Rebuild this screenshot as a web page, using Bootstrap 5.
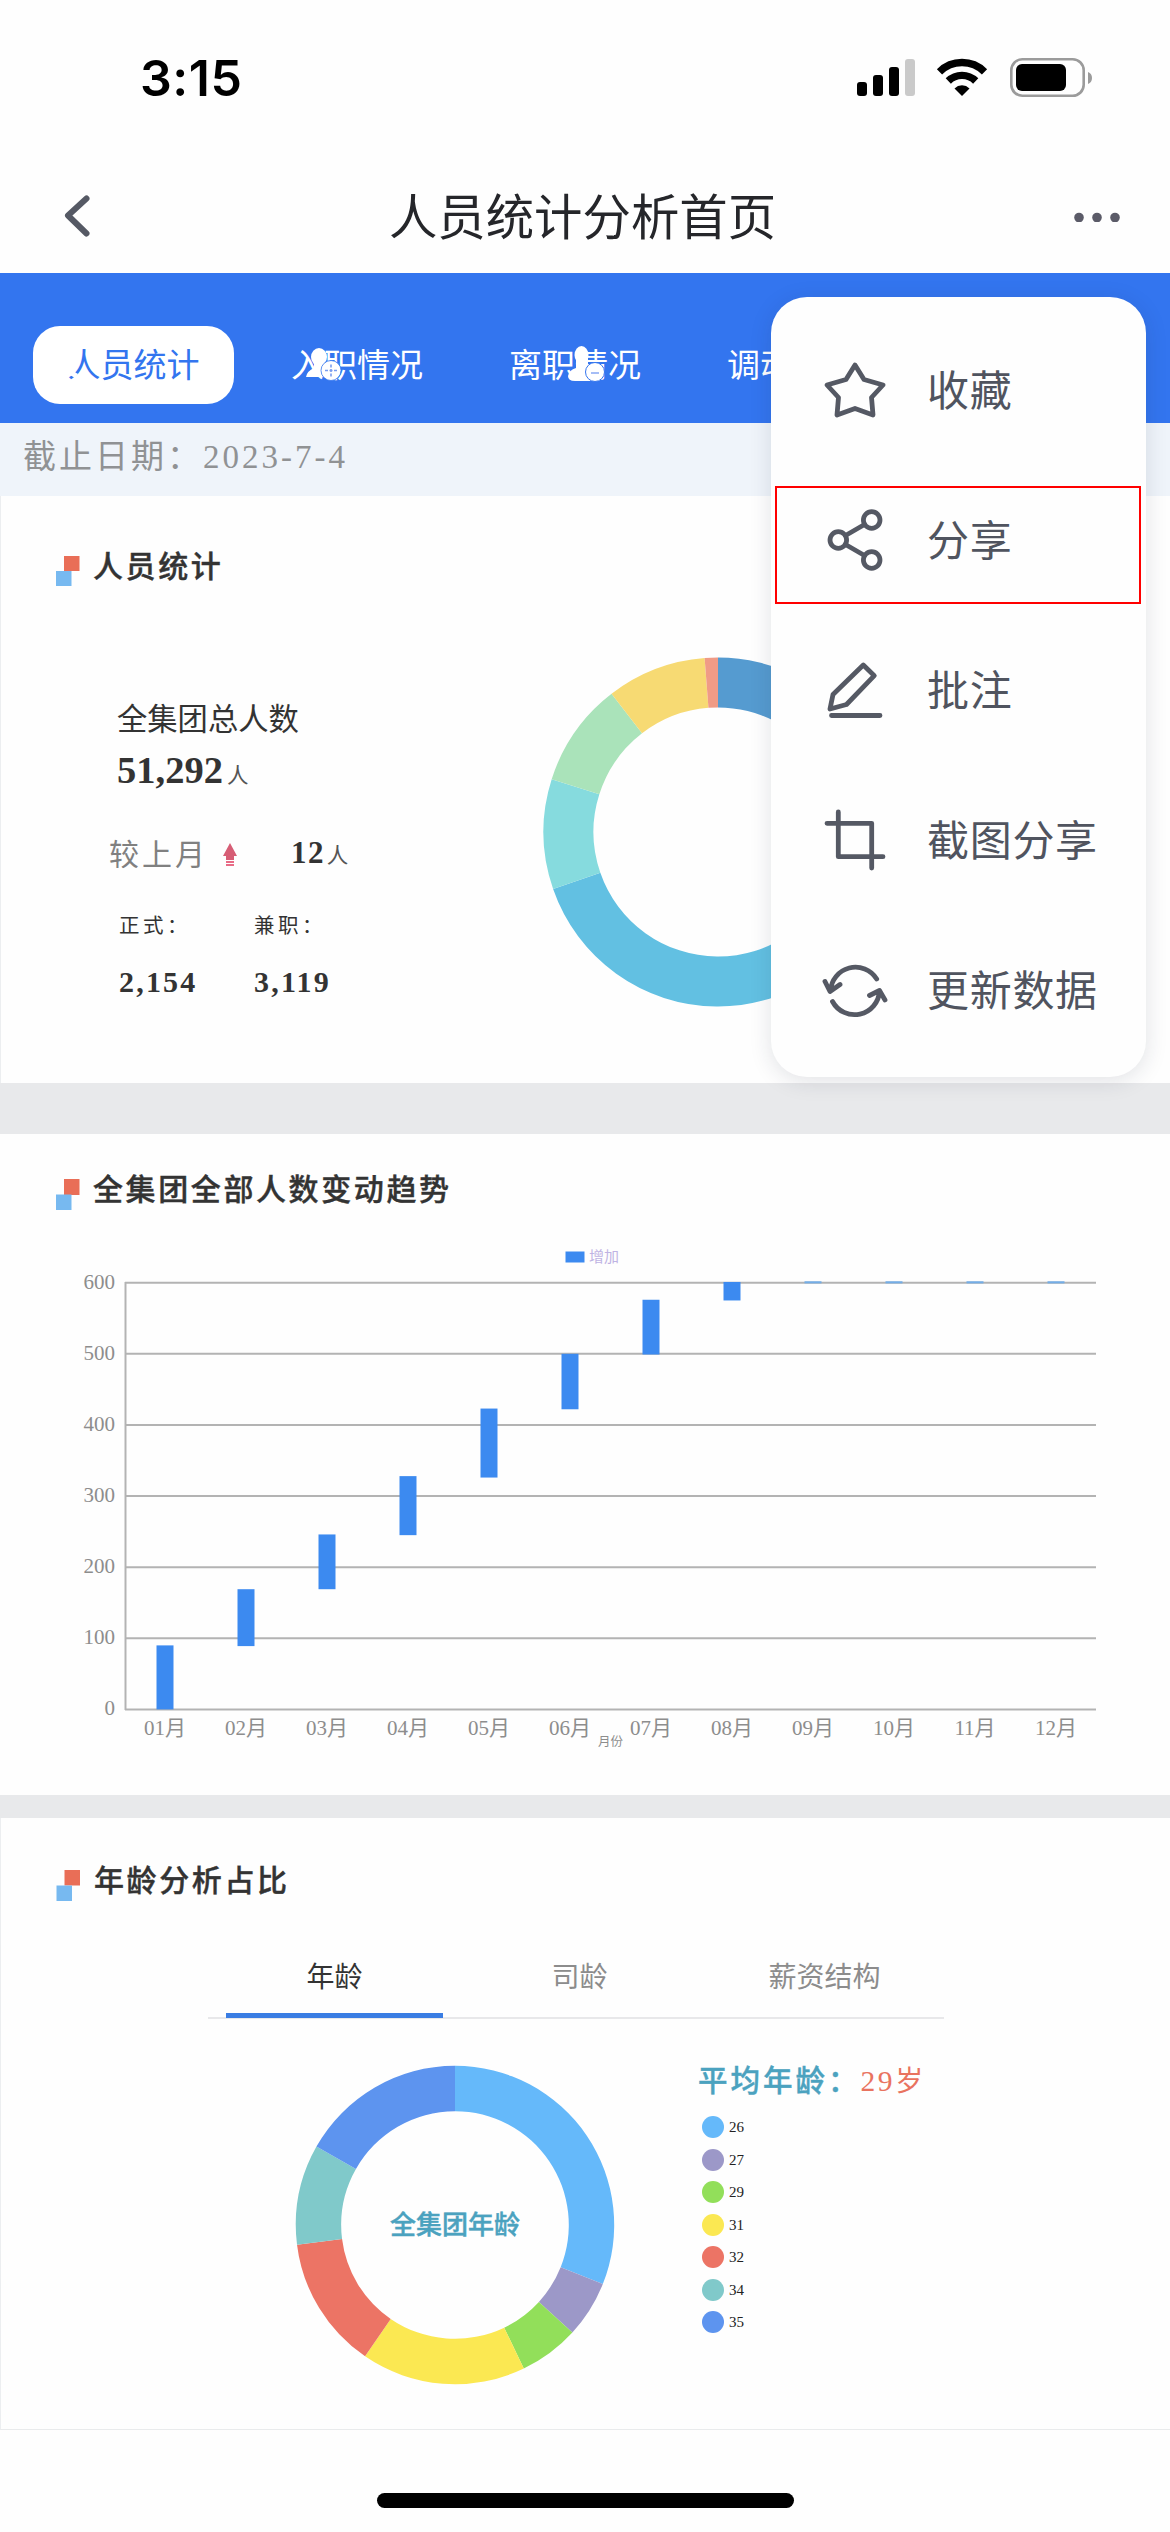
<!DOCTYPE html>
<html lang="zh-CN">
<head>
<meta charset="utf-8">
<meta name="viewport" content="width=device-width, initial-scale=1">
<title>人员统计分析首页</title>
<link href="https://cdn.jsdelivr.net/npm/bootstrap@5.3.0/dist/css/bootstrap.min.css" rel="stylesheet">
<style>
  body { width: 1170px; height: 2532px; overflow: hidden; background: #fefefe; color: #333; font-family: "Liberation Sans", "Noto Sans CJK SC", sans-serif; }
  svg { display: block; flex: none; }
  .num-face { font-family: "Liberation Serif", "Noto Sans CJK SC", serif; }
  .status-bar { height: 156px; padding: 58px 78px 0 140px; }
  .clock { font: 600 50px/40px Inter, sans-serif; color: #000; letter-spacing: .5px; }
  .title-bar { height: 117px; padding: 0 49px 0 60px; }
  .title-bar h1 { font-size: 48.4px; line-height: 60px; font-weight: 400; color: #25262a; margin: 0; padding-top: 7px; }
  .tab-strip { height: 150px; background: #3375ef; padding: 53px 0 0 33px; overflow: hidden; flex-wrap: nowrap; }
  .tab-strip .nav-link { width: 218px; height: 78px; flex: none; padding: 0; font-size: 33px; line-height: 79px; color: #fff; text-align: center; white-space: nowrap; }
  .tab-strip .nav-link.active { width: 201px; margin-right: 14px; border-radius: 27px; background: #fff; color: #3375ef; }
  .person-icon { position: absolute; left: 0; top: 0; }
  .date-strip { height: 73px; background: #eff4fa; padding-left: 23px; font-size: 33px; line-height: 68px; letter-spacing: 3px; color: #909294; }
  .panel { border-left: 1px solid #eceef0; position: relative; }
  .divider { background: #e8e9eb; }
  .panel-head { padding-left: 55px; gap: 13px; }
  .panel-head h2 { margin: 0; font-size: 30px; line-height: 36px; font-weight: 500; -webkit-text-stroke: .4px; letter-spacing: 2.6px; color: #333; }
  .people { height: 587px; padding-top: 53px; }
  .trend { height: 661px; padding-top: 38px; border-left: 0; }
  .ages { height: 612px; padding-top: 45px; border-bottom: 1px solid #e9ebec; }
  .figures { width: 542px; padding: 114px 0 0 116px; }
  .total-label { font-size: 30.3px; line-height: 40px; }
  .total-value { font-size: 38.5px; line-height: 44px; font-weight: 700; margin-top: 8px; }
  .unit { font-size: 21.5px; font-weight: 400; color: #555; letter-spacing: 0; }
  .compare { margin: 35px 0 0 -8px; line-height: 40px; }
  .compare-label { font-size: 30px; letter-spacing: 3px; color: #808080; width: 114px; }
  .compare-value { font-size: 31px; font-weight: 700; letter-spacing: 1.4px; margin-left: 54px; }
  .compare-value .unit { margin-left: 2px; }
  .split { padding-left: 2px; }
  .split > div { width: 135px; }
  .split-label { font-size: 20.5px; letter-spacing: 3.5px; line-height: 30px; margin-top: 35px; }
  .split-value { font-size: 30px; letter-spacing: 2.2px; line-height: 36px; font-weight: 700; margin-top: 23px; }
  .group-donut { margin-top: 71px; }
  .age-tabs { width: 736px; margin: 37px 0 0 207px; padding-left: 18px; height: 81px; border-bottom: 2px solid #e8e8ea; }
  .age-tabs .nav-link { width: 217px; height: 80px; flex: none; padding: 0; margin-right: 28px; border-bottom: 5px solid transparent; font-size: 28px; line-height: 79px; text-align: center; color: #8c8c8c; }
  .age-tabs .nav-link:last-child { margin-right: 0; }
  .age-tabs .nav-link.active { color: #333; border-color: #3a7de3; }
  .age-body { padding: 46px 0 0 294px; }
  .age-side { padding-left: 83px; }
  .average { font-size: 29.5px; line-height: 40px; letter-spacing: 3px; color: #4ba2bf; font-weight: 500; -webkit-text-stroke: .4px; white-space: nowrap; margin-top: -4px; }
  .average span { color: #e9735f; font-weight: 400; letter-spacing: 2.6px; -webkit-text-stroke: 0; }
  .average i { font-style: normal; font-size: 28px; }
  .key-row { height: 32.5px; font-size: 15px; gap: 5px; color: #222; }
  .dot { width: 22px; height: 22px; border-radius: 50%; }
  .home-bar { width: 417px; height: 15px; border-radius: 8px; background: #000; margin: 63px auto 0 377px; }
  .action-menu { position: absolute; left: 771px; top: 297px; width: 375px; height: 780px; padding: 18px 0 12px; border: 0; border-radius: 36px; background: #fefefe; box-shadow: 0 4px 22px rgba(30, 40, 60, .13); display: block; }
  .action-menu .dropdown-item { height: 150px; padding: 0 0 0 54px; display: flex; align-items: center; gap: 42px; font-size: 42px; letter-spacing: .7px; color: #50545f; position: relative; }
  .action-menu .picked::after { content: ""; position: absolute; left: 4px; top: 21px; width: 366px; height: 118px; border: 2px solid #f00; }
  .action-menu .dropdown-item span { padding-top: 2px; }
  .line-icon { fill: none; stroke: #555964; stroke-width: 4.8; stroke-linecap: round; stroke-linejoin: round; overflow: visible; }
  .back-icon { stroke-width: 6; }
</style>
</head>
<body class="position-relative">
<header class="status-bar d-flex justify-content-between align-items-start">
  <div class="clock">3:15</div>
  <svg width="236" height="40" viewBox="0 0 236 40">
    <g fill="#000"><rect x="1" y="24" width="10" height="14" rx="3"/><rect x="17" y="17" width="10" height="21" rx="3"/><rect x="33" y="9" width="10" height="29" rx="3"/><rect x="49" y="1" width="10" height="37" rx="3" fill="#cacaca"/></g>
    <g fill="none" stroke="#000" stroke-width="7.4"><path d="M83.5 13.8A32 32 0 0 1 128.500 13.800"/><path d="M92.300 23A19.500 19.500 0 0 1 119.700 23"/></g>
    <path d="M98.500 30.400A10.800 10.800 0 0 1 113.500 30.400L106 38Z"/>
    <rect x="155.300" y="1.300" width="72.400" height="36.400" rx="11" fill="none" stroke="#9b9b9b" stroke-width="2.600"/>
    <rect x="160" y="6" width="50" height="27" rx="6"/><path d="M232 14Q236 15.500 236 20T232 26Z" fill="#9b9b9b"/>
  </svg>
</header>
<div class="title-bar d-flex justify-content-between align-items-center">
  <svg width="34" height="44" class="line-icon back-icon"><path d="M26.500 5.500 8 22.500 26.500 40.500"/></svg>
  <h1>人员统计分析首页</h1>
  <svg width="50" height="14" fill="#5b5b68"><circle cx="8" cy="9.500" r="4.800"/><circle cx="26" cy="9.500" r="4.800"/><circle cx="44" cy="9.500" r="4.800"/></svg>
</div>
<nav class="nav tab-strip position-relative">
  <a class="nav-link active">人员统计</a><a class="nav-link">入职情况</a><a class="nav-link">离职情况</a><a class="nav-link">调动情况</a>
  <svg class="person-icon" width="700" height="150" fill="#fff">
    <path d="M73 98l5 3-3 4-5-3z"/>
    <ellipse cx="319" cy="84" rx="8" ry="9"/><path d="M314 86h11v6l8 10v2h-27q1-6 8-9z"/><circle cx="331" cy="97.500" r="10" stroke="#3375ef" stroke-width=".8"/>
    <path d="M331 91.500v12M325 97.500h12" stroke="#7a9df0" stroke-width="1.600" stroke-dasharray="3 1.500"/>
    <ellipse cx="581.500" cy="82" rx="7" ry="9"/><path d="M576 84h12v7l12 8v9h-25q-7 0-7-5 1-6 8-8z"/><circle cx="595" cy="99" r="9.500" stroke="#3375ef" stroke-width="1"/>
    <path d="M591 100h8" stroke="#8fadf4" stroke-width="1.600"/>
  </svg>
</nav>
<div class="date-strip num-face">截止日期：2023-7-4</div>

<main>
<section class="panel people">
  <div class="panel-head d-flex align-items-start">
    <svg width="24" height="37"><rect x="8" y="7" width="15.500" height="15" fill="#e96e57"/><rect y="22" width="15.500" height="15" fill="#77b9f0"/></svg>
    <h2>人员统计</h2>
  </div>
  <div class="d-flex align-items-start">
    <div class="figures num-face">
      <div class="total-label">全集团总人数</div>
      <div class="total-value">51,292<span class="unit ms-1">人</span></div>
      <div class="compare d-flex align-items-center">
        <span class="compare-label">较上月</span>
        <svg width="14" height="24" fill="#d65d75"><path d="M7 0 14 13H11V17H3V13H0Z"/><path d="M3 18h8v2H3zM3 21h8v2H3z" fill="#e86b86"/></svg>
        <span class="compare-value">12<span class="unit">人</span></span>
      </div>
      <div class="split d-flex">
        <div><div class="split-label">正式：</div><div class="split-value">2,154</div></div>
        <div><div class="split-label">兼职：</div><div class="split-value">3,119</div></div>
      </div>
    </div>
    <svg class="group-donut" id="groupDonut" width="350" height="350" viewBox="-175 -175 350 350"></svg>
  </div>
</section>
<div class="divider" style="height:51px"></div>
<section class="panel trend">
  <div class="panel-head d-flex align-items-start" style="padding-left:56px">
    <svg width="24" height="38"><rect x="8" y="7" width="15.500" height="16" fill="#e96e57"/><rect y="22.500" width="15.500" height="15.500" fill="#77b9f0"/></svg>
    <h2>全集团全部人数变动趋势</h2>
  </div>
  <svg id="trendChart" class="num-face" width="1170" height="540" viewBox="0 1210 1170 540"></svg>
</section>
<div class="divider" style="height:23px"></div>
<section class="panel ages">
  <div class="panel-head d-flex align-items-start">
    <svg width="25" height="38"><rect x="8.500" y="7" width="15.500" height="15.500" fill="#e96e57"/><rect x=".5" y="22.500" width="15.500" height="15.500" fill="#77b9f0"/></svg>
    <h2>年龄分析占比</h2>
  </div>
  <nav class="nav age-tabs flex-nowrap"><a class="nav-link active">年龄</a><a class="nav-link">司龄</a><a class="nav-link">薪资结构</a></nav>
  <div class="age-body d-flex align-items-start">
    <svg id="ageDonut" width="320" height="320" viewBox="-160 -160 320 320"></svg>
    <div class="age-side num-face">
      <div class="average">平均年龄：<span>29<i>岁</i></span></div>
      <div id="ageKey" class="ps-1" style="margin-top:9px"></div>
    </div>
  </div>
</section>
</main>
<div class="home-bar"></div>

<div class="dropdown-menu show action-menu">
  <a class="dropdown-item"><svg class="line-icon" width="60" height="60"><path d="M30 5 39 19.500 58 25 46.500 37.500 48 55 30 48.500 12 55 13.500 37.500 2 25 21 19.500Z"/></svg><span>收藏</span></a>
  <a class="dropdown-item picked"><svg class="line-icon" width="60" height="60"><circle cx="13.300" cy="30" r="8.300"/><circle cx="46.700" cy="10" r="8.300"/><circle cx="46.700" cy="50" r="8.300"/><path d="M20.500 25.500 39.500 14.500M20.500 34.500 39.500 45.500"/></svg><span>分享</span></a>
  <a class="dropdown-item"><svg class="line-icon" width="60" height="60"><path d="M38.300 5 49.300 15.700 21.500 44.500 5 49 8 34.500ZM6.500 55.500H55"/></svg><span>批注</span></a>
  <a class="dropdown-item"><svg class="line-icon" width="60" height="60"><path d="M13.300 2V46.700H58M2 13.300H46.700V58"/></svg><span>截图分享</span></a>
  <a class="dropdown-item"><svg class="line-icon" width="60" height="60"><path d="M51.700 19A25 25 0 0 0 5.500 31M0 21.500 5 31.500 15 24.500M7.500 41.500A25 25 0 0 0 54.500 31M44.500 35.500 54.500 30.500 60 40"/></svg><span>更新数据</span></a>
</div>

<script src="https://cdn.jsdelivr.net/npm/bootstrap@5.3.0/dist/js/bootstrap.bundle.min.js"></script>
<script>
  // Ring slices: each entry is [end angle in degrees, colour], clockwise from the top.
  function ring(slices, outer, inner) {
    let from = 0;
    return slices.map(([to, fill]) => {
      const point = (deg, r) => (r * Math.sin(deg * Math.PI / 180)).toFixed(2) + ' ' + (-r * Math.cos(deg * Math.PI / 180)).toFixed(2);
      const large = to - from > 180 ? 1 : 0;
      const d = `M${point(from, outer)}A${outer} ${outer} 0 ${large} 1 ${point(to, outer)}L${point(to, inner)}A${inner} ${inner} 0 ${large} 0 ${point(from, inner)}Z`;
      from = to;
      return `<path d="${d}" fill="${fill}"/>`;
    }).join('');
  }
  groupDonut.innerHTML = ring([[110, '#559bd0'], [250.9, '#62c0e2'], [287.6, '#86dbde'], [322.4, '#aae3ba'], [355.6, '#f7da73'], [360, '#f09b86']], 174.5, 124.5);
  const ages = [[26, 111.8, '#65b9fa'], [27, 132.5, '#9c98c8'], [29, 154.4, '#92df5a'], [31, 214.4, '#fbe852'], [32, 262.9, '#ec7465'], [34, 299.5, '#80c9ca'], [35, 360, '#5d94ef']];
  ageDonut.innerHTML = ring(ages.map(a => [a[1], a[2]]), 159.2, 113.8) +
    '<text y="9" text-anchor="middle" font-size="26" font-weight="500" stroke="#4ba2bf" stroke-width=".4" fill="#4ba2bf">全集团年龄</text>';
  ageKey.innerHTML = ages.map(a => `<div class="key-row d-flex align-items-center"><span class="dot" style="background:${a[2]}"></span>${a[0]}</div>`).join('');

  // Monthly floating bars, values are [low, high].
  const months = [[0, 90], [89, 169], [169, 246], [245, 328], [326, 423], [422, 500], [499, 576], [575, 601], [599, 602], [599, 602], [599, 602], [599, 602]];
  const yOf = v => 1709.4 - v * .7112;
  let s = '<rect x="565.500" y="1251.500" width="19" height="11" fill="#3c8af0"/><text x="589" y="1262" font-size="15" fill="#bfb3e3">增加</text>';
  for (let v = 0; v <= 600; v += 100)
    s += `<path d="M125 ${yOf(v)}H1096" stroke="#b3b3b3" stroke-width="2"/><text x="115" y="${yOf(v) + 6}" font-size="21" text-anchor="end" fill="#8d8d8d">${v}</text>`;
  s += '<path d="M125.500 1282V1710" stroke="#b3b3b3" stroke-width="2"/>';
  months.forEach(([lo, hi], i) => {
    const x = 165 + i * 81;
    s += `<rect x="${x - 8.5}" y="${yOf(hi)}" width="17" height="${yOf(lo) - yOf(hi)}" fill="${i > 7 ? '#74ade6' : '#3c8af0'}"/>` +
      `<text x="${x}" y="1735" font-size="21" text-anchor="middle" fill="#8d8d8d">${String(i + 1).padStart(2, '0')}月</text>`;
  });
  s += '<text x="610.500" y="1745.500" font-size="12.500" text-anchor="middle" fill="#8d8d8d">月份</text>';
  trendChart.innerHTML = s;
</script>
</body>
</html>
